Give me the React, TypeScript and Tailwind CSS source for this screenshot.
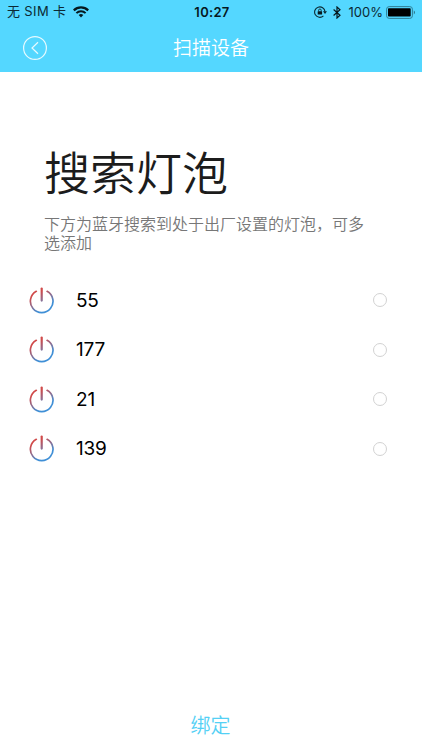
import { useState } from "react";

const devices = ["55", "177", "21", "139"];

function WifiIcon() {
  return (
    <svg width="16" height="12" viewBox="0 0 16 12" fill="none" stroke="#06181e">
      <path d="M0.8 4.4a10.2 10.2 0 0 1 14.4 0" strokeWidth="2.2" />
      <path d="M3.4 7.1a6.5 6.5 0 0 1 9.2 0" strokeWidth="2" />
      <path d="M8 11.4 5.7 9.1a3.3 3.3 0 0 1 4.6 0Z" fill="#06181e" stroke="none" />
    </svg>
  );
}

function RotationLockIcon() {
  return (
    <svg width="13" height="12" viewBox="0 0 13 12" fill="none" stroke="#0b2a34">
      <path d="M9.4 9.9A5.2 5.2 0 1 1 11 5.6" strokeWidth="1.1" />
      <path d="M8.9 5.3h4.1L11 7.9Z" fill="#0b2a34" stroke="none" />
      <rect x="3.7" y="5.2" width="4.4" height="3.4" rx="0.4" fill="#06181e" stroke="none" />
      <path d="M4.6 5.4V4.3a1.3 1.3 0 0 1 2.6 0v1.1" strokeWidth="0.9" />
    </svg>
  );
}

function BluetoothIcon() {
  return (
    <svg width="8" height="13" viewBox="0 0 8 13" fill="none" stroke="#06181e" strokeWidth="1.2">
      <path d="M0.6 3.5 7 9.3 4 12V1l3 2.7L0.6 9.5" />
    </svg>
  );
}

function BatteryIcon() {
  return (
    <svg width="30" height="13" viewBox="0 0 30 13" fill="none">
      <rect x="0.6" y="0.6" width="25.8" height="11.8" rx="2.6" stroke="#2f7f96" strokeWidth="1" />
      <rect x="2" y="2.2" width="22.7" height="8.4" rx="0.8" fill="#000" />
      <path d="M27.8 4.6c1.5.6 1.5 3.2 0 3.8Z" fill="#2a7085" />
    </svg>
  );
}

function PowerIcon() {
  return (
    <svg width="26" height="27" viewBox="0 0 26 27" fill="none" stroke="url(#power)" strokeLinecap="round">
      <defs>
        <linearGradient id="power" gradientUnits="userSpaceOnUse" x1="6" y1="4" x2="18" y2="23">
          <stop offset="0.15" stopColor="#d04a4a" />
          <stop offset="0.5" stopColor="#8f6c8e" />
          <stop offset="0.85" stopColor="#3f8fd6" />
        </linearGradient>
      </defs>
      <path d="M7.3 4.3a11.3 11.3 0 1 0 10.8 0" strokeWidth="1.7" />
      <path d="M12.7 1.6v12" strokeWidth="2.2" />
    </svg>
  );
}

function App() {
  const [selected, setSelected] = useState<string[]>([]);
  const toggle = (name: string) => {
    setSelected((list) =>
      list.includes(name) ? list.filter((n) => n !== name) : [...list, name]
    );
  };
  return (
    <div className="h-[750px] w-full flex flex-col bg-white font-['Inter','Noto_Sans_CJK_SC',sans-serif]">
      <header className="h-[72px] bg-[#54d7ff]">
        <div className="h-6 pl-[7px] pr-1.5 grid grid-cols-3 items-center text-[13px] text-[#0b2a34]">
          <div className="flex items-center gap-[7px]">
            <span className="whitespace-nowrap tracking-[0.35px]">无 SIM 卡</span>
            <WifiIcon />
          </div>
          <span className="pl-px pt-px text-center font-semibold text-[#06181e] tracking-[0.3px]">10:27</span>
          <div className="flex items-center justify-end">
            <RotationLockIcon />
            <span className="ml-1.5 mr-2">
              <BluetoothIcon />
            </span>
            <span className="mr-[3px] pt-px">100%</span>
            <BatteryIcon />
          </div>
        </div>
        <div className="h-12 px-[23px] grid grid-cols-3 items-center">
          <button>
            <svg width="24" height="24" viewBox="0 0 24 24" fill="none" stroke="#e6faff">
              <circle cx="12" cy="12" r="11.4" strokeWidth="1.2" />
              <path d="M15 6.3 9 12l6 5.8" strokeWidth="1.2" />
            </svg>
          </button>
          <h1 className="pt-[3px] text-center text-[19px] font-[350] text-white">扫描设备</h1>
        </div>
      </header>
      <main className="flex-1">
        <h2 className="mt-[67px] ml-[44px] text-[46px] leading-[68px] text-[#1c1c1c] font-[350]">
          搜索灯泡
        </h2>
        <p className="mt-[8px] ml-[44px] w-[324px] text-[16px] leading-[19px] font-[350] text-[#777]">
          下方为蓝牙搜索到处于出厂设置的灯泡，可多选添加
        </p>
        <ul className="mt-[22.5px]">
          {devices.map((name) => (
            <li
              key={name}
              onClick={() => toggle(name)}
              className="h-[49.5px] pl-[29px] pr-[35px] flex items-center"
            >
              <PowerIcon />
              <span className="ml-[21px] pt-px flex-1 text-[19px] tracking-[-0.2px] text-black">{name}</span>
              <span
                className={
                  selected.includes(name)
                    ? "size-[14px] rounded-full border border-[#54d7ff] bg-[#54d7ff]"
                    : "size-[14px] rounded-full border border-[#d2d2d2]"
                }
              />
            </li>
          ))}
        </ul>
      </main>
      <button className="h-[50px] pt-0.5 pr-px text-[20px] font-[350] text-[#54d0f5]">绑定</button>
    </div>
  );
}

export default App;
